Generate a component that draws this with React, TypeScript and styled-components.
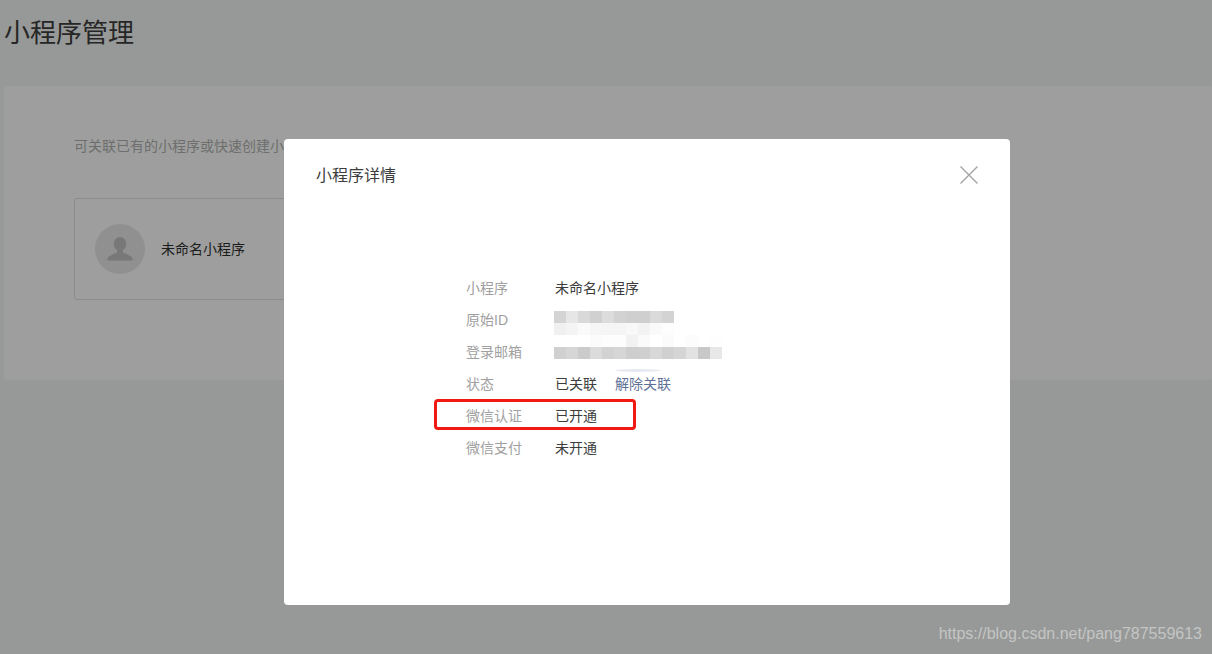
import React from "react";
import styled, { createGlobalStyle } from "styled-components";

const Global = createGlobalStyle`
  html, body { margin: 0; padding: 0; }
  body { font-family: "Liberation Sans", "Noto Sans CJK SC", sans-serif; }
`;

const Page = styled.div`
  position: relative;
  width: 1212px;
  height: 654px;
  overflow: hidden;
  background: #979998;
  padding: 0 0 0 4px;
  box-sizing: border-box;
`;

const Title = styled.h1`
  margin: 0;
  height: 86px;
  padding-top: 16px;
  box-sizing: border-box;
  font-size: 26px;
  line-height: 35px;
  font-weight: 400;
  color: #262626;
`;

const Card = styled.section`
  height: 294px;
  background: #9e9e9e;
  border-radius: 2px;
  padding: 50px 70px 0;
  box-sizing: border-box;
`;

const Intro = styled.p`
  margin: 0 0 42px;
  font-size: 14px;
  line-height: 20px;
  color: #6d6e6d;
`;

const AppItem = styled.div`
  display: flex;
  align-items: center;
  gap: 16px;
  width: 500px;
  height: 102px;
  padding-left: 20px;
  box-sizing: border-box;
  border: 1px solid #8b8d8c;
  border-radius: 3px;
`;

const Avatar = styled.div`
  width: 50px;
  height: 50px;
  border-radius: 50%;
  background: #8f908f;
  display: flex;
  align-items: center;
  justify-content: center;
`;

const AppName = styled.span`
  font-size: 14px;
  margin-top: -2px;
  color: #1c1c1c;
`;

const Modal = styled.div`
  position: absolute;
  left: 284px;
  top: 139px;
  width: 726px;
  height: 466px;
  background: #fff;
  border-radius: 4px;
  box-sizing: border-box;
  padding: 25px 31px 0 32px;
`;

const ModalHeader = styled.header`
  display: flex;
  align-items: center;
  justify-content: space-between;
  height: 24px;
`;

const ModalTitle = styled.h2`
  margin: 0;
  font-size: 16px;
  line-height: 24px;
  font-weight: 400;
  color: #3c3c3c;
`;

const CloseButton = styled.button`
  display: flex;
  margin-top: -2px;
  padding: 0;
  border: 0;
  background: none;
`;

const Details = styled.dl`
  margin: 83px 0 0 150px;
  display: grid;
  grid-template-columns: 89px 1fr;
  grid-auto-rows: 32px;
  align-items: center;
  font-size: 14px;
`;

const Label = styled.dt`
  color: #a0a0a0;
`;

const Value = styled.dd`
  position: relative;
  margin: 0;
  color: #3c3c3c;
  display: flex;
  gap: 18px;
`;

const LinkText = styled.a`
  color: #5f7198;
`;

const Mosaic = styled.div<{ $top: number; $left: number }>`
  position: absolute;
  top: ${(p) => p.$top}px;
  left: ${(p) => p.$left}px;
  display: grid;
  grid-auto-flow: column;
  grid-auto-columns: 12px;
  grid-template-rows: 12px 12px;
`;

const MosaicCell = styled.i<{ $shade: string }>`
  display: block;
  width: 12px;
  height: 12px;
  background: ${(p) => p.$shade};
`;

const Smudge = styled.div`
  position: absolute;
  left: 60px;
  top: -4px;
  width: 46px;
  height: 3px;
  border-radius: 50%;
  background: #e6e9f1;
`;

const Highlight = styled.div`
  position: absolute;
  left: 434px;
  top: 399px;
  width: 202px;
  height: 31px;
  box-sizing: border-box;
  border: 3px solid #f01a12;
  border-radius: 4px;
`;

const Watermark = styled.div`
  position: absolute;
  right: 10px;
  bottom: 10px;
  font-size: 16px;
  line-height: 20px;
  color: #c4c5c4;
`;

const idTop = ["#d4d4d4", "#e6e6e6", "#d9d9d9", "#d0d0d0", "#dcdcdc", "#d2d2d2", "#cfcfcf", "#cfcfcf", "#dadada", "#d3d3d3"];
const idBottom = ["#f0f0f0", "#f4f4f4", "#fafafa", "#f6f6f6", "#f5f5f5", "#f5f5f5", "#f8f8f8", "#f3f3f3", "#fafafa", "#fdfdfd"];
const mailTop = ["#ffffff", "#ffffff", "#ffffff", "#fbfbfb", "#fdfdfd", "#fdfdfd", "#f2f2f2", "#fafafa", "#ffffff", "#fbfbfb", "#ffffff", "#fcfcfc", "#ffffff", "#fefefe"];
const mailBottom = ["#d0d0d0", "#d6d6d6", "#cbcbcb", "#dbdbdb", "#d2d2d2", "#d6d6d6", "#cecece", "#cfcfcf", "#d8d8d8", "#d0d0d0", "#d5d5d5", "#e2e2e2", "#c8c8c8", "#e8e8e8"];

const cells = (top: string[], bottom: string[]) =>
  top.flatMap((shade, i) => [
    <MosaicCell key={`t${i}`} $shade={shade} />,
    <MosaicCell key={`b${i}`} $shade={bottom[i]} />,
  ]);

export default function App() {
  return (
    <>
      <Global />
      <Page>
        <Title>小程序管理</Title>
        <Card>
          <Intro>可关联已有的小程序或快速创建小程序</Intro>
          <AppItem>
            <Avatar>
              <svg width="28" height="28" viewBox="0 0 28 28" aria-hidden="true">
                <ellipse cx="14" cy="9" rx="6.2" ry="7" fill="#777877" />
                <path d="M11 15h6v2.5c3 1.6 8.5 3 9.5 6 .3 1 0 2-1 2H2.500c-1 0-1.300-1-1-2 1-3 6.500-4.400 9.500-6z" fill="#777877" />
              </svg>
            </Avatar>
            <AppName>未命名小程序</AppName>
          </AppItem>
        </Card>
        <Modal>
          <ModalHeader>
            <ModalTitle>小程序详情</ModalTitle>
            <CloseButton aria-label="关闭">
              <svg width="20" height="20" viewBox="0 0 20 20" aria-hidden="true">
                <path d="M1.500 1.500l17 17M18.500 1.500l-17 17" stroke="#a3a3a3" strokeWidth="1.400" fill="none" />
              </svg>
            </CloseButton>
          </ModalHeader>
          <Details>
            <Label>小程序</Label>
            <Value>未命名小程序</Value>
            <Label>原始ID</Label>
            <Value>
              <Mosaic $top={-8} $left={-1}>{cells(idTop, idBottom)}</Mosaic>
            </Value>
            <Label>登录邮箱</Label>
            <Value>
              <Mosaic $top={-16} $left={-1}>{cells(mailTop, mailBottom)}</Mosaic>
            </Value>
            <Label>状态</Label>
            <Value>
              <span>已关联</span>
              <LinkText>解除关联</LinkText>
              <Smudge />
            </Value>
            <Label>微信认证</Label>
            <Value>已开通</Value>
            <Label>微信支付</Label>
            <Value>未开通</Value>
          </Details>
        </Modal>
        <Highlight />
        <Watermark>https://blog.csdn.net/pang787559613</Watermark>
      </Page>
    </>
  );
}
